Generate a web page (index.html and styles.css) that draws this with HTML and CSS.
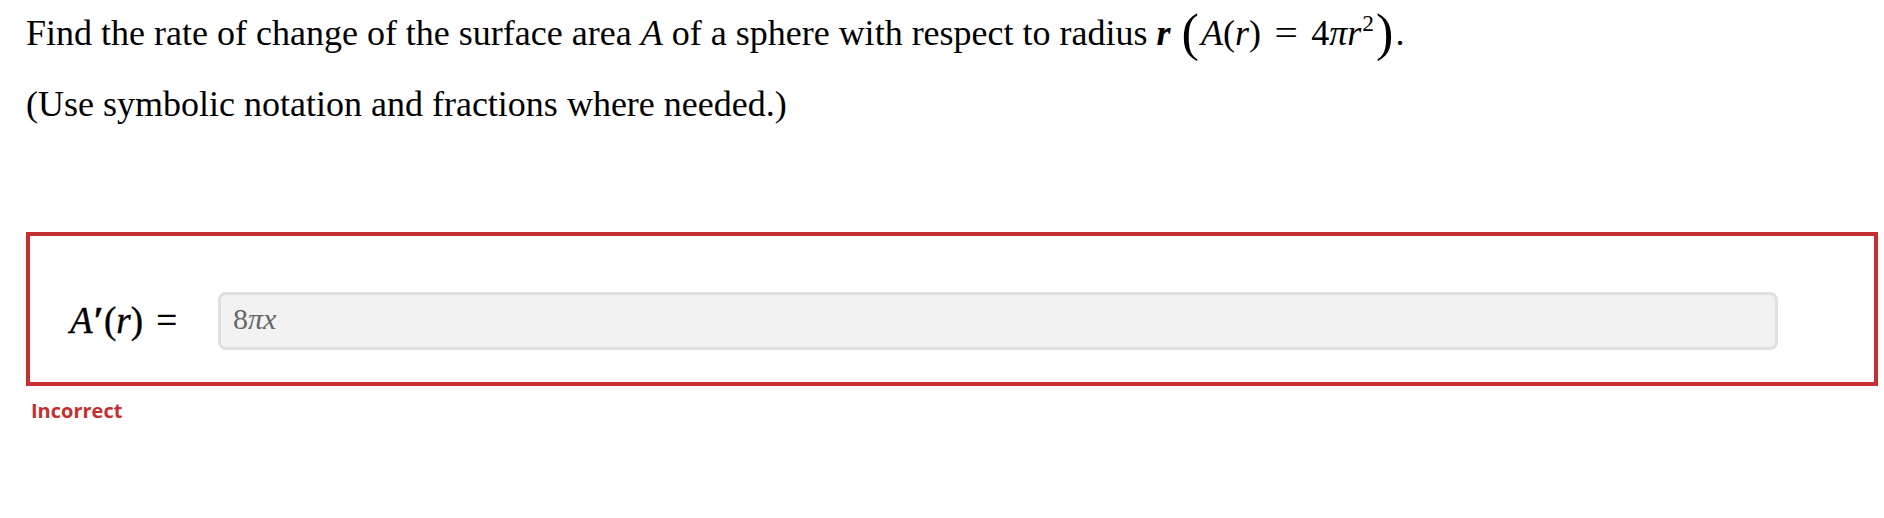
FILE: index.html
```html
<!DOCTYPE html>
<html>
<head>
<meta charset="utf-8">
<link rel="stylesheet" href="styles.css">
</head>
<body>
<div class="page">
  <p class="q">Find the rate of change of the surface area <i>A</i> of a sphere with respect to radius <i class="bold">r</i> <span class="math"><span class="big">(</span><i>A</i>(<i>r</i>) <span class="eq">=</span> 4<i>π</i><i>r</i><sup>2</sup><span class="big">)</span></span>.</p>
  <p class="q q2">(Use symbolic notation and fractions where needed.)</p>
  <div class="answer">
    <div class="lhs"><i>A</i><span class="prime">′</span>(<i>r</i>) <span class="eq">=</span></div>
    <div class="field">8<i>π</i><i>x</i></div>
  </div>
  <div class="status">Incorrect</div>
</div>
</body>
</html>
```
FILE: styles.css
```css
html, body {
  margin: 0;
  padding: 0;
  background: #ffffff;
}
.page {
  padding: 13px 6px 0 26px;
  font-family: "Liberation Serif", "Times New Roman", serif;
  color: #000;
}
.q {
  margin: 0;
  font-size: 36px;
  line-height: 40px;
}
.q2 {
  margin-top: 31px;
}
.bold {
  font-weight: bold;
}
.math sup {
  font-size: 0.65em;
  line-height: 0;
  vertical-align: 0.6em;
  margin-left: 1px;
}
.big {
  font-size: 1.45em;
  line-height: 0;
  vertical-align: -0.1em;
  font-style: normal;
  font-weight: 300;
  margin: 0 2px;
}
.math .eq {
  display: inline-block;
  transform: scaleX(1.15);
  padding: 0 6px;
}
.answer {
  box-sizing: border-box;
  margin-top: 108px;
  height: 154px;
  border: 4px solid #c62f2f;
  display: flex;
  align-items: center;
  padding: 56px 96px 32px 40px;
}
.lhs {
  flex: none;
  width: 148px;
  font-size: 37px;
  line-height: 40px;
  white-space: nowrap;
  -webkit-text-stroke: 0.4px #000;
}
.lhs .eq {
  padding: 0 4px;
}
.prime {
  font-style: normal;
  font-weight: bold;
  margin-left: 1px;
}
.field {
  flex: 1;
  box-sizing: border-box;
  height: 58px;
  border: 3px solid #dfdfdf;
  border-radius: 8px;
  background: #f2f2f2;
  padding-left: 12px;
  font-size: 30px;
  line-height: 48px;
  color: #666;
}
.status {
  margin: 12px 0 0 5px;
  font-family: "Open Sans", "Liberation Sans", sans-serif;
  font-weight: bold;
  font-size: 20px;
  line-height: 26px;
  color: #c62f2f;
}
```
